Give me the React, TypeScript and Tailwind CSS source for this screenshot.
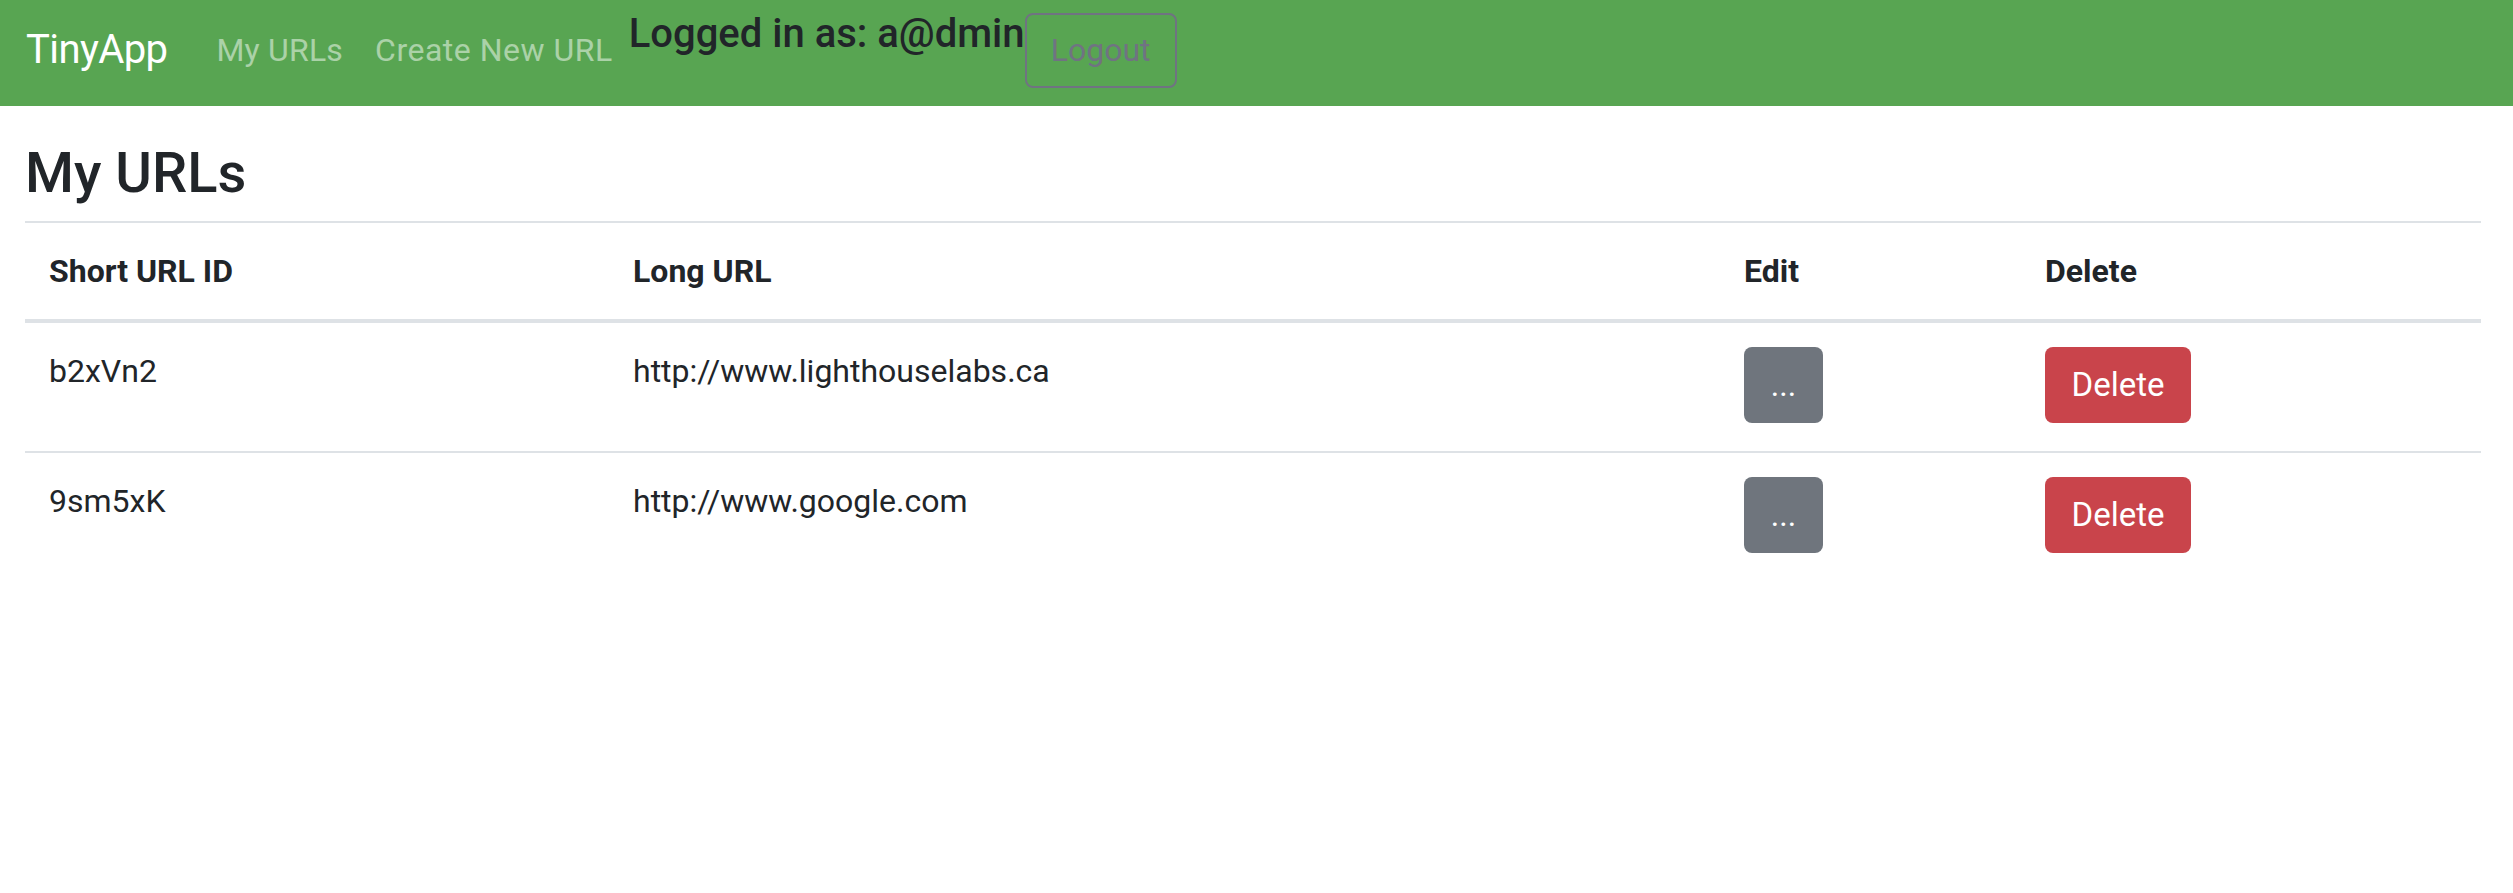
const urls = [
  { id: "b2xVn2", long: "http://www.lighthouselabs.ca" },
  { id: "9sm5xK", long: "http://www.google.com" },
];

const App = () => {
  return (
    <div className="min-h-screen bg-white text-[#212529] font-['Roboto','Liberation_Sans',sans-serif]">
      {/* navbar */}
      <nav className="h-[106px] bg-[#58a552] flex items-center pb-[6px] pl-[26px]">
        <a href="#" className="text-[40px] leading-[60px] tracking-[-0.6px] text-white mr-[33px]">
          TinyApp
        </a>
        <ul className="flex items-center">
          <li>
            <a href="#" className="block px-[16px] text-[32px] leading-[48px] tracking-[0.2px] text-white/50">
              My URLs
            </a>
          </li>
          <li>
            <a href="#" className="block px-[16px] text-[32px] leading-[48px] tracking-[0.5px] text-white/50">
              Create New URL
            </a>
          </li>
        </ul>
        <h5 className="self-start mt-[10px] text-[40px] leading-[48px] font-medium text-[#212529]">
          Logged in as: a@dmin
        </h5>
        <button className="h-[75px] w-[152px] border-2 border-[#707382] rounded-[8px] text-[32px] leading-[48px] text-[#707382]">
          Logout
        </button>
      </nav>

      <main className="pl-[25px] pr-[32px]">
        <h3 className="mt-[34px] mb-[14px] text-[56px] leading-[67px] font-medium">My URLs</h3>
        <table className="w-full table-fixed border-collapse text-[32px] leading-[48px]">
          <colgroup>
            <col className="w-[584px]" />
            <col className="w-[1111px]" />
            <col className="w-[301px]" />
            <col />
          </colgroup>
          <thead>
            <tr className="border-t-2 border-b-4 border-[#dee2e6]">
              <th className="text-left font-bold p-[24px]">Short URL ID</th>
              <th className="text-left font-bold p-[24px]">Long URL</th>
              <th className="text-left font-bold p-[24px]">Edit</th>
              <th className="text-left font-bold p-[24px]">Delete</th>
            </tr>
          </thead>
          <tbody>
            {urls.map((u, i) => (
              <tr key={u.id} className={i > 0 ? "border-t-2 border-[#dee2e6]" : ""}>
                <td className="align-top pt-[24px] pb-[28px] px-[24px]">{u.id}</td>
                <td className="align-top pt-[24px] pb-[28px] px-[24px]">{u.long}</td>
                <td className="align-top pt-[24px] pb-[28px] px-[24px]">
                  <button className="block h-[76px] w-[79px] rounded-[8px] bg-[#6f757d] text-white text-[32px] leading-[48px]">
                    ...
                  </button>
                </td>
                <td className="align-top pt-[24px] pb-[28px] px-[24px]">
                  <button className="block h-[76px] w-[146px] rounded-[8px] bg-[#c9444b] text-white text-[33px] leading-[48px]">
                    Delete
                  </button>
                </td>
              </tr>
            ))}
          </tbody>
        </table>
      </main>
    </div>
  );
};

export default App;
